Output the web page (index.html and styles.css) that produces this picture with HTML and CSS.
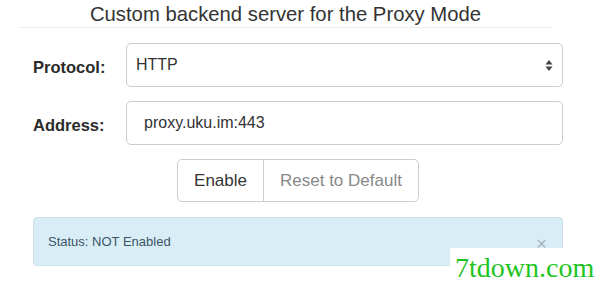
FILE: index.html
```html
<!DOCTYPE html>
<html>
<head>
<meta charset="utf-8">
<link rel="stylesheet" href="styles.css">
</head>
<body>
<div class="page">
  <h3 class="title">Custom backend server for the Proxy Mode</h3>
  <div class="form">
    <div class="row">
      <label class="label">Protocol:</label>
      <div class="control select">
        <span>HTTP</span>
        <svg class="arrows" width="8" height="13" viewBox="0 0 8 13"><path d="M4 1 L7.5 5.5 H0.5 Z M4 12 L7.5 7.5 H0.5 Z" fill="#444"/></svg>
      </div>
    </div>
    <div class="row">
      <label class="label">Address:</label>
      <div class="control input">proxy.uku.im:443</div>
    </div>
    <div class="btn-row">
      <div class="btn-group">
        <span class="btn">Enable</span>
        <span class="btn disabled">Reset to Default</span>
      </div>
    </div>
    <div class="alert">
      <span>Status: NOT Enabled</span>
      <span class="close">×</span>
    </div>
  </div>
</div>
<div class="watermark">7tdown.com</div>
</body>
</html>
```
FILE: styles.css
```css
html, body {
  margin: 0;
  padding: 0;
  background: #fff;
  font-family: "Liberation Sans", Arial, sans-serif;
  color: #333;
}
.page {
  width: 600px;
  height: 287px;
  overflow: hidden;
}
.title {
  margin: 0 48px 0 19px;
  height: 27px;
  line-height: 28px;
  font-size: 20.3px;
  font-weight: normal;
  text-align: center;
  color: #333;
  border-bottom: 1px solid #eee;
}
.form {
  margin: 15px 37px 0 33px;
  display: flex;
  flex-direction: column;
  gap: 14px;
}
.row {
  display: flex;
  align-items: center;
  height: 44px;
}
.label {
  width: 93px;
  padding-top: 4px;
  font-weight: bold;
  font-size: 16.5px;
  color: #2b2b2b;
}
.control {
  flex: 1;
  height: 42px;
  border: 1px solid #ccc;
  border-radius: 5px;
  display: flex;
  align-items: center;
  font-size: 16px;
  color: #333;
}
.select {
  padding: 0 9px 0 9px;
  justify-content: space-between;
}
.input {
  padding: 0 17px;
}
.btn-row {
  display: flex;
  justify-content: center;
}
.btn-group {
  display: flex;
  height: 41px;
  border: 1px solid #ccc;
  border-radius: 5px;
}
.btn {
  display: flex;
  align-items: center;
  padding: 0 16px;
  font-size: 17px;
  color: #333;
}
.btn.disabled {
  border-left: 1px solid #ccc;
  color: #888;
}
.alert {
  margin-top: 1px;
  height: 47px;
  background: #d9edf7;
  border: 1px solid #c9e3ef;
  border-radius: 4px;
  display: flex;
  align-items: center;
  justify-content: space-between;
  padding: 0 15px 0 14px;
  font-size: 13px;
  color: #3b5566;
}
.close {
  font-size: 19px;
  color: #a7b6c0;
  margin-top: 5px;
}
.watermark {
  position: absolute;
  left: 450px;
  top: 248px;
  width: 150px;
  height: 39px;
  background: #fff;
  font-family: "Liberation Serif", "Times New Roman", serif;
  font-size: 28px;
  color: #1ec41e;
  line-height: 39px;
  padding-left: 5px;
  box-sizing: border-box;
  white-space: nowrap;
}
```
